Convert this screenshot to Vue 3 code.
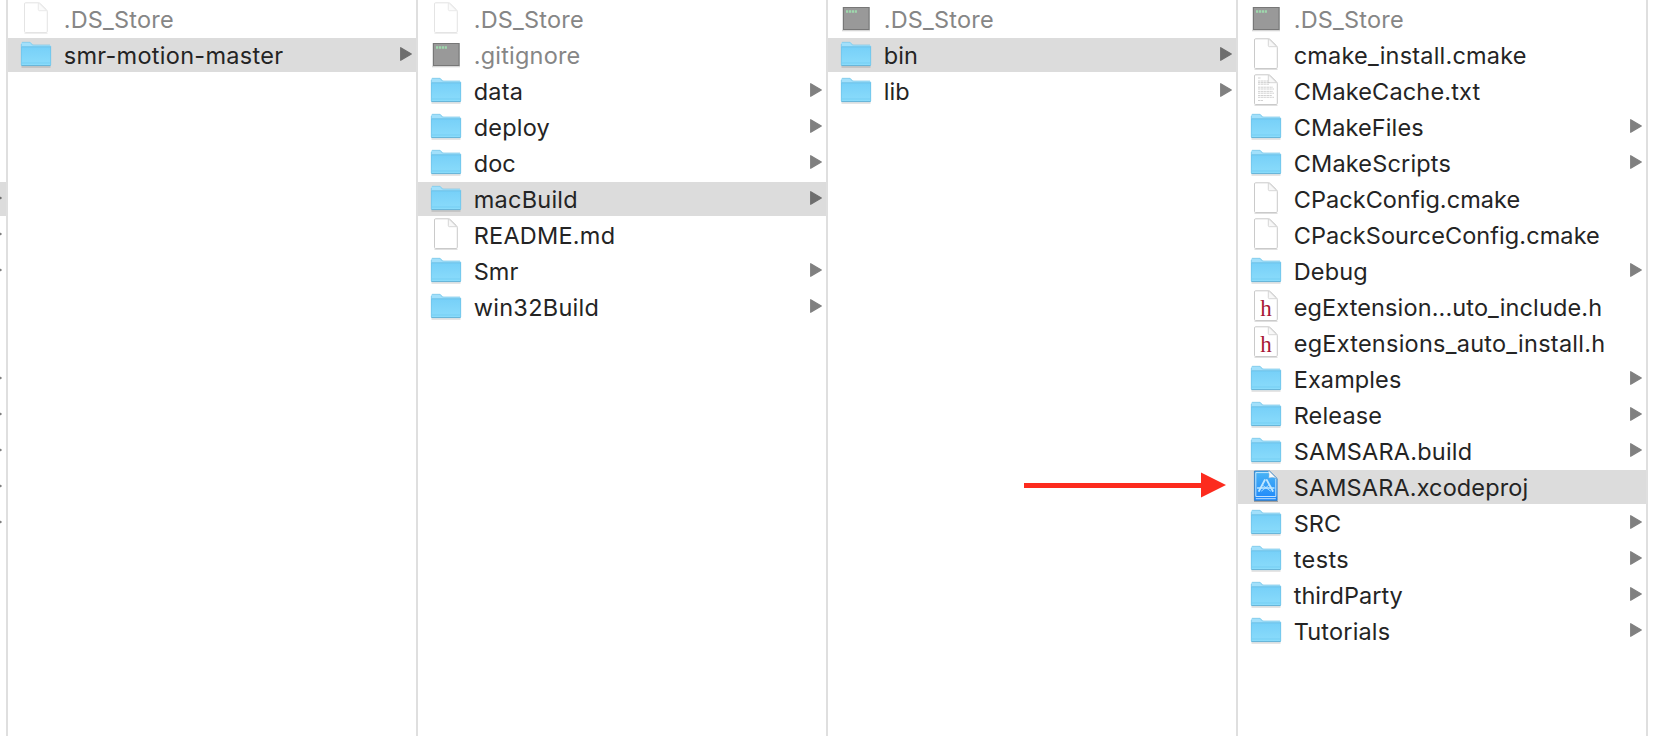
<script setup>
const row = (name, kind = 'folder', extra = {}) => ({ name, kind, ...extra })

// Letter spacing per label, in px
const tracking = {
  '.DS_Store': 0.2,
  'smr-motion-master': 0.29,
  '.gitignore': 0.2,
  data: 0.25,
  deploy: 0.2,
  macBuild: 0.25,
  'README.md': 0.23,
  win32Build: 0.28,
  'cmake_install.cmake': 0.2,
  'CMakeCache.txt': 0.15,
  CMakeScripts: 0.17,
  'CPackConfig.cmake': 0.05,
  'CPackSourceConfig.cmake': 0.08,
  Debug: 0.15,
  'egExtension...uto_include.h': 0.12,
  'egExtensions_auto_install.h': 0.25,
  Release: 0.15,
  'SAMSARA.build': 0.2,
  'SAMSARA.xcodeproj': 0.13,
  tests: 0.4,
  thirdParty: 0.02,
  Tutorials: 0.17,
}
const spacing = (name) => ({ letterSpacing: `${tracking[name] ?? 0.1}px` })

const edgeArrows = [5, 6, 7, 10, 11, 12, 13, 14]
const columns = [
  {
    edge: true,
    items: Array.from({ length: 15 }, (_, i) => ({
      name: '',
      kind: edgeArrows.includes(i) ? 'folder' : 'doc',
      selected: i === 5,
    })),
  },
  {
    items: [
      row('.DS_Store', 'doc', { hidden: true }),
      row('smr-motion-master', 'folder', { selected: true }),
    ],
  },
  {
    items: [
      row('.DS_Store', 'doc', { hidden: true }),
      row('.gitignore', 'exec', { hidden: true }),
      row('data'),
      row('deploy'),
      row('doc'),
      row('macBuild', 'folder', { selected: true }),
      row('README.md', 'doc'),
      row('Smr'),
      row('win32Build'),
    ],
  },
  {
    items: [
      row('.DS_Store', 'exec', { hidden: true }),
      row('bin', 'folder', { selected: true }),
      row('lib'),
    ],
  },
  {
    items: [
      row('.DS_Store', 'exec', { hidden: true }),
      row('cmake_install.cmake', 'doc'),
      row('CMakeCache.txt', 'text'),
      row('CMakeFiles'),
      row('CMakeScripts'),
      row('CPackConfig.cmake', 'doc'),
      row('CPackSourceConfig.cmake', 'doc'),
      row('Debug'),
      row('egExtension...uto_include.h', 'header'),
      row('egExtensions_auto_install.h', 'header'),
      row('Examples'),
      row('Release'),
      row('SAMSARA.build'),
      row('SAMSARA.xcodeproj', 'xcode', { selected: true }),
      row('SRC'),
      row('tests'),
      row('thirdParty'),
      row('Tutorials'),
    ],
  },
]
const textLines = [
  [4, 3], [7, 10], [8.6, 12], [10.2, 11], [13.2, 15], [15, 16],
  [17.4, 15], [19.2, 16], [21.5, 14], [23.3, 16], [26.5, 5],
]
</script>

<template>
  <main class="finder">
    <svg class="defs" width="0" height="0" aria-hidden="true">
      <defs>
        <linearGradient id="folderFill" x1="0" y1="0" x2="0" y2="1">
          <stop offset="0" stop-color="#77d0f8" />
          <stop offset="1" stop-color="#8bdcfb" />
        </linearGradient>
        <linearGradient id="xcodeFill" x1="0" y1="0" x2="0" y2="1">
          <stop offset="0" stop-color="#4bb5f5" />
          <stop offset="1" stop-color="#1c86fb" />
        </linearGradient>
      </defs>
    </svg>
    <section v-for="(col, c) in columns" :key="c" class="column" :class="{ edge: col.edge }">
      <div
        v-for="(item, i) in col.items"
        :key="i"
        class="row"
        :class="{ selected: item.selected, dim: item.hidden }"
      >
        <template v-if="!col.edge">
          <svg class="icon" width="34" height="34" viewBox="0 0 34 34">
            <g v-if="item.kind === 'folder'">
              <path d="M2.5 29h29" stroke="#000" stroke-opacity=".13" stroke-width="1.6" />
              <path d="M2 6Q2 4 3.7 4H10.5Q11.6 4 12.4 5L13.4 6.2Q14 7 15 7H30.5Q32 7 32 8.5V12H2Z" fill="#a2e0fb" />
              <path d="M3 4.3H11L13.4 7H31" fill="none" stroke="#7cc5e6" stroke-width=".7" />
              <path d="M2 9H32V27Q32 28 31 28H3Q2 28 2 27Z" fill="url(#folderFill)" />
              <path d="M2.5 8.8H31.5" stroke="#66bde4" stroke-width=".9" />
              <path d="M2.3 6V27M31.7 8V27" stroke="#69bde2" stroke-width=".6" />
              <path d="M3 25H31" stroke="#6fcaf0" stroke-width=".7" />
              <path d="M2.4 27.6H31.6" stroke="#62add0" stroke-width=".9" />
            </g>
            <g v-else-if="item.kind === 'exec'">
              <path d="M3 28.500H31" stroke="#000" stroke-opacity=".16" stroke-width="1.600" />
              <rect x="3.500" y="5" width="27.500" height="23" fill="#c3c6c6" />
              <rect x="4.500" y="5.500" width="25.500" height="22" fill="#999" stroke="#777" />
              <path d="M7 9.500H18" stroke="#9ed9ad" stroke-width="2.400" stroke-dasharray="2.200 .7" />
            </g>
            <g v-else-if="item.kind === 'xcode'">
              <path d="M5 31.300H29" stroke="#000" stroke-opacity=".3" stroke-width="1.200" />
              <path d="M5.400 1H20.500L28.100 8.500V30.500H5.400Z" fill="url(#xcodeFill)" stroke="#2c76be" stroke-width=".8" />
              <path d="M6.800 26.500V2.600H20M26.800 9V26.500H6.800M6.800 28.700H26.800" fill="none" stroke="#e4f5ff" stroke-width=".8" />
              <path d="M19.500 1.300Q20.700 4 19.800 7.800Q24 6.500 27.500 8.500L20.500 1.500Z" fill="#f8f9fa" stroke="#b8c5d0" stroke-width=".4" />
              <g fill="none" stroke="#bfe7ff" stroke-linecap="round" stroke-linejoin="round">
                <path d="M15.800 10L10 21M17.800 10L23.800 21" stroke-width="1.800" />
                <path d="M8.500 18H25" stroke-width="1.400" />
                <path d="M14 15.500L21.500 21M19.500 15.500L12.500 21" stroke-width=".8" />
              </g>
            </g>
            <g v-else :opacity="item.hidden ? 0.5 : 1">
              <path d="M5.500 31.300H28.500" stroke="#000" stroke-opacity=".14" stroke-width="1.200" />
              <path
                d="M6.500 .8H19.500Q20.500 .8 21.300 1.600L27.500 7.700Q28.300 8.500 28.300 9.800V29.300Q28.300 30.500 27.200 30.500H6.500Q5.500 30.500 5.500 29.300V2Q5.500 .8 6.500 .8Z"
                fill="#fff"
                stroke="#c4c4c4"
                stroke-width=".9"
              />
              <path d="M19.300 1.200V7.500Q19.300 8.700 20.500 8.700H27.500L20.500 1.700Z" fill="#f8f8f8" stroke="#cdcdcd" stroke-width=".8" />
              <g v-if="item.kind === 'text'" stroke="#b4b4b4" stroke-width=".6" stroke-dasharray="2 .5 3 .4">
                <path v-for="([y, w], n) in textLines" :key="n" :d="`M9 ${y}h${w}`" />
              </g>
              <text v-if="item.kind === 'header'" x="17" y="26" class="glyph">h</text>
            </g>
          </svg>
          <span class="name" :style="spacing(item.name)">{{ item.name }}</span>
        </template>
        <svg v-if="item.kind === 'folder'" class="chevron" width="12" height="14" viewBox="0 0 12 14">
          <path d="M.7 .7L11.300 7L.7 13.300Z" fill="currentColor" stroke="currentColor" stroke-width="1.200" stroke-linejoin="round" />
        </svg>
      </div>
    </section>
    <svg class="pointer" width="204" height="26" viewBox="0 0 204 26">
      <path d="M0 11H177V.5L202 13L177 25.500V16H0Z" fill="#fc2b1e" />
    </svg>
  </main>
</template>

<style>
body {
  margin: 0;
  background: #fff;
}
</style>

<style scoped>
.finder {
  position: relative;
  display: flex;
  width: 1654px;
  height: 736px;
  overflow: hidden;
  background: #fff;
  font-family: Inter, "Liberation Sans", sans-serif;
  color: #242424;
}
.defs {
  position: absolute;
}
.column {
  box-sizing: border-box;
  flex: none;
  width: 410px;
  height: 736px;
  padding-top: 2px;
  border-right: 2px solid #dfdfdf;
  display: flex;
  flex-direction: column;
  gap: 2px;
}
.column.edge {
  width: 8px;
  overflow: hidden;
}
.row {
  box-sizing: border-box;
  flex: none;
  display: flex;
  align-items: flex-start;
  height: 34px;
  padding: 0 4px 0 11px;
}
.edge .row {
  justify-content: flex-end;
  padding-left: 0;
}
.selected {
  background: #dcdcdc;
}
.icon {
  flex: none;
}
.name {
  flex: 1;
  margin-left: 10.700px;
  font-size: 23.500px;
  line-height: 36px;
  white-space: nowrap;
}
.dim .name {
  color: #868686;
}
.chevron {
  flex: none;
  margin-top: 9px;
  color: #808080;
}
.selected .chevron {
  color: #6e6e6e;
}
.glyph {
  font-family: "Liberation Serif", serif;
  font-size: 23px;
  text-anchor: middle;
  fill: #a81735;
}
.pointer {
  position: absolute;
  left: 1024px;
  top: 472px;
}
</style>
